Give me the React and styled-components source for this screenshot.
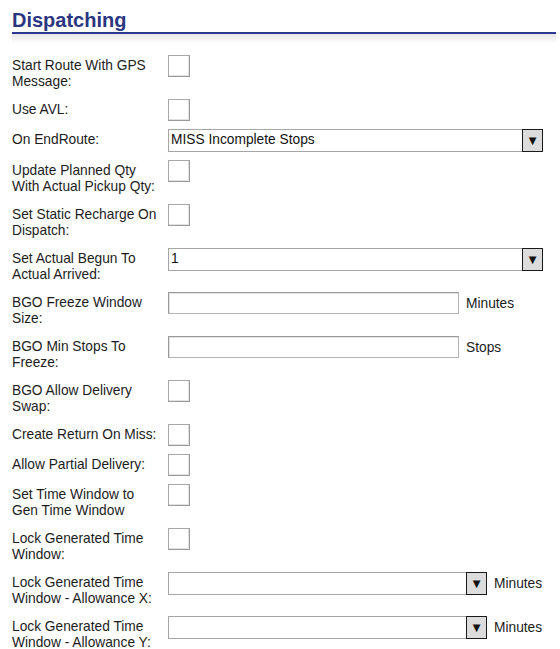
import React from 'react'
import styled, { createGlobalStyle } from 'styled-components'

const GlobalStyle = createGlobalStyle`
    body {
        margin: 0;
        background: #fff;
        font-family: "Liberation Sans", Arial, sans-serif;
    }
`

const rows = [
    { label: 'Start Route With GPS Message:', type: 'check' },
    { label: 'Use AVL:', type: 'check' },
    { label: 'On EndRoute:', type: 'select', value: 'MISS Incomplete Stops', width: 375 },
    { label: 'Update Planned Qty With Actual Pickup Qty:', type: 'check' },
    { label: 'Set Static Recharge On Dispatch:', type: 'check' },
    { label: 'Set Actual Begun To Actual Arrived:', type: 'select', value: '1', width: 375 },
    { label: 'BGO Freeze Window Size:', type: 'text', unit: 'Minutes' },
    { label: 'BGO Min Stops To Freeze:', type: 'text', unit: 'Stops' },
    { label: 'BGO Allow Delivery Swap:', type: 'check' },
    { label: 'Create Return On Miss:', type: 'check' },
    { label: 'Allow Partial Delivery:', type: 'check' },
    { label: 'Set Time Window to Gen Time Window', type: 'check' },
    { label: 'Lock Generated Time Window:', type: 'check' },
    { label: 'Lock Generated Time Window - Allowance X:', type: 'select', value: '', width: 319, unit: 'Minutes' },
    { label: 'Lock Generated Time Window - Allowance Y:', type: 'select', value: '', width: 319, unit: 'Minutes' },
]

function Control({ row }) {
    if (row.type === 'check') {
        return <CheckBox type="checkbox" />
    }
    if (row.type === 'text') {
        return <TextInput type="text" />
    }
    return (
        <SelectBox width={row.width}>
            <SelectValue>{row.value}</SelectValue>
            <ArrowButton>▼</ArrowButton>
        </SelectBox>
    )
}

function App() {
    return (
        <Page>
            <GlobalStyle />
            <Title>Dispatching</Title>
            <Shade />
            <Form>
                {rows.map((row) => (
                    <Row key={row.label}>
                        <Label>{row.label}</Label>
                        <Field>
                            <Control row={row} />
                            {row.unit && <Unit>{row.unit}</Unit>}
                        </Field>
                    </Row>
                ))}
            </Form>
        </Page>
    )
}

export default App

const Page = styled.div`
    padding: 0 4px 0 12px;
    color: #1c1c1c;
`

const Title = styled.h2`
    margin: 0;
    padding-top: 8px;
    font-size: 20px;
    line-height: 24px;
    font-weight: bold;
    color: #2b3680;
    border-bottom: 2px solid #2b3990;
`

const Shade = styled.div`
    height: 10px;
    background: linear-gradient(#e6e6e6, #ffffff);
`

const Form = styled.div`
    margin-top: 11px;
`

const Row = styled.div`
    display: flex;
    align-items: flex-start;
    gap: 8px;
    margin-bottom: 8px;
`

const Label = styled.div`
    width: 148px;
    flex-shrink: 0;
    padding: 3px 0 1px;
    font-size: 13.75px;
    line-height: 16px;
    color: #1c1c1c;
`

const Field = styled.div`
    display: flex;
    align-items: center;
    gap: 7px;
`

const CheckBox = styled.input`
    appearance: none;
    margin: 0;
    width: 22px;
    height: 22px;
    box-sizing: border-box;
    background: #fff;
    border: 1px solid #a8a8a8;
    border-right-color: #999;
    border-bottom-color: #999;
    box-shadow: inset -1px -1px 0 #e2e2e2;
`

const TextInput = styled.input`
    margin: 0;
    width: 291px;
    height: 22px;
    box-sizing: border-box;
    border: 1px solid #b4b4b4;
    border-top-color: #999;
    border-left-color: #999;
    box-shadow: inset 1px 1px 0 #e4e4e4;
    font-family: inherit;
    font-size: 13.75px;
`

const SelectBox = styled.div`
    display: flex;
    align-items: stretch;
    width: ${(p) => p.width}px;
    height: 23px;
    box-sizing: border-box;
    border: 1px solid #a6a6a6;
    border-right: none;
    background: #fff;
`

const SelectValue = styled.div`
    flex: 1;
    padding-left: 2px;
    font-size: 13.75px;
    line-height: 19px;
    color: #111;
`

const ArrowButton = styled.div`
    width: 21px;
    margin: -1px 0;
    box-sizing: border-box;
    border: 1px solid #1a1a1a;
    background: #dcdcdc;
    font-family: "DejaVu Sans", sans-serif;
    font-size: 10px;
    line-height: 21px;
    text-align: center;
    color: #111;
`

const Unit = styled.span`
    font-size: 13.75px;
    color: #1c1c1c;
`
